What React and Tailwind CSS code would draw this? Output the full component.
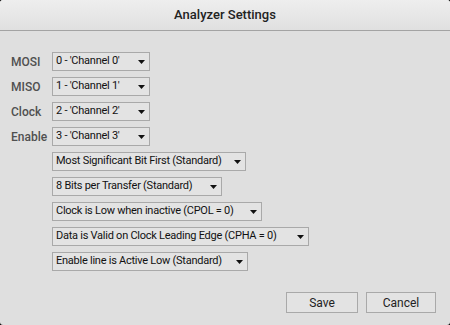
import { useState } from 'react'

const channels = [
  { label: 'MOSI', value: "0 - 'Channel 0'" },
  { label: 'MISO', value: "1 - 'Channel 1'" },
  { label: 'Clock', value: "2 - 'Channel 2'" },
  { label: 'Enable', value: "3 - 'Channel 3'" },
]

const options = [
  { value: 'Most Significant Bit First (Standard)', width: 'w-[194px]' },
  { value: '8 Bits per Transfer (Standard)', width: 'w-[170px]' },
  { value: 'Clock is Low when inactive (CPOL = 0)', width: 'w-[210px]' },
  { value: 'Data is Valid on Clock Leading Edge (CPHA = 0)', width: 'w-[257px]' },
  { value: 'Enable line is Active Low (Standard)', width: 'w-[196px]' },
]

function Dropdown({ value, width }) {
  return (
    <div className={`flex h-[19px] ${width} items-center justify-between border border-[#a9a9a9] bg-[#e3e3e3] pl-[3px] pr-[4px] text-[11px] tracking-[-0.25px] text-[#111] font-['Roboto',sans-serif]`}>
      <span className="whitespace-nowrap">{value}</span>
      <svg width="7" height="4" viewBox="0 0 7 4" className="shrink-0">
        <path d="M0 0 H7 L3.5 4 Z" fill="#111" />
      </svg>
    </div>
  )
}

export default function App() {
  const [saved, setSaved] = useState(false)

  return (
    <div className="h-[325px] w-[450px] bg-black">
      <div className="flex h-full w-full flex-col overflow-hidden rounded-[3px] bg-[#dfdfdf] font-['Roboto',sans-serif]">
        {/* Title bar */}
        <div className="flex h-[31px] shrink-0 items-center justify-center border-b border-[#a3a3a3] bg-gradient-to-b from-[#eeeeee] to-[#e0e0e0]">
          <span className="text-[13px] font-medium text-[#222]">Analyzer Settings</span>
        </div>

        {/* Body */}
        <div className="flex flex-1 flex-col gap-[6px] pt-[21px]">
          {channels.map(ch => (
            <div key={ch.label} className="flex items-center">
              <span className="w-[52px] pl-[11px] text-[12px] font-medium text-[#505050]">{ch.label}</span>
              <Dropdown value={ch.value} width="w-[98px]" />
            </div>
          ))}
          {options.map(opt => (
            <div key={opt.value} className="pl-[52px]">
              <Dropdown value={opt.value} width={opt.width} />
            </div>
          ))}
        </div>

        {/* Footer */}
        <div className="flex justify-end gap-[8px] pb-[12px] pr-[14px]">
          <button onClick={() => setSaved(true)} className="h-[21px] w-[72px] border border-[#a9a9a9] bg-[#e3e3e3] text-[12px] text-[#222]">
            Save
          </button>
          <button onClick={() => setSaved(false)} className="h-[21px] w-[70px] border border-[#a9a9a9] bg-[#e3e3e3] text-[12px] text-[#222]">
            Cancel
          </button>
        </div>
      </div>
    </div>
  )
}
